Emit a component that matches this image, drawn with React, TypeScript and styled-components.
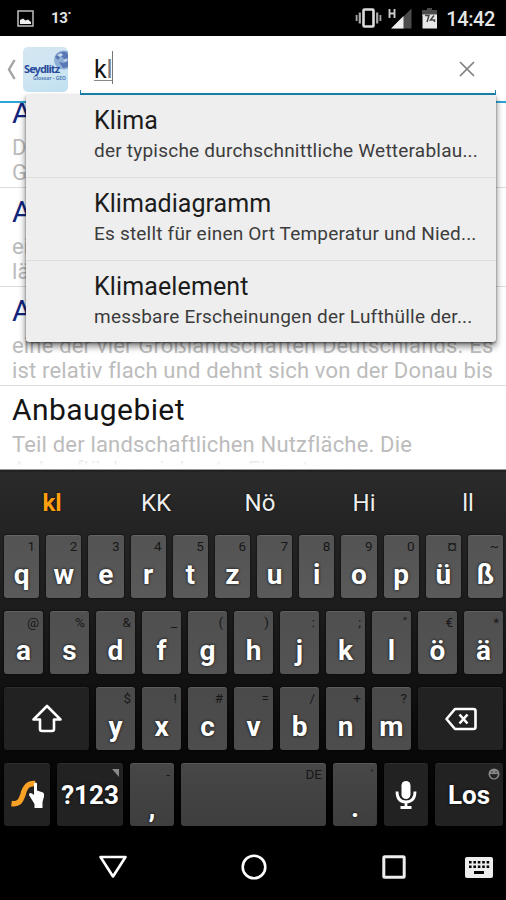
import React from 'react';
import styled, { createGlobalStyle, css } from 'styled-components';

const GlobalStyle = createGlobalStyle`
  * { box-sizing: border-box; }
  html, body { margin: 0; padding: 0; background: #000; }
  body { font-family: Roboto, "Noto Sans", sans-serif; overflow: hidden; }
`;

const Screen = styled.div`
  display: flex;
  flex-direction: column;
  width: 506px;
  height: 900px;
  overflow: hidden;
  background: #fff;
`;

/* ---------- status bar ---------- */

const StatusBar = styled.div`
  display: flex;
  align-items: center;
  flex: none;
  height: 36px;
  padding: 0 11px 0 17px;
  background: #000;
  color: #e6e6e6;
`;

const Temperature = styled.span`
  margin-left: 17px;
  font-size: 15px;
  font-weight: 700;
  letter-spacing: -0.3px;
`;

const StatusIcons = styled.div`
  display: flex;
  align-items: center;
  margin-left: auto;
`;

const Clock = styled.span`
  margin-left: 8px;
  padding-top: 2px;
  font-size: 20px;
  line-height: 36px;
  font-weight: 500;
  letter-spacing: -0.4px;
`;

/* ---------- action bar ---------- */

const ActionBar = styled.header`
  position: relative;
  z-index: 2;
  display: flex;
  flex: none;
  height: 67px;
  padding-left: 7px;
  background: #fff;
  border-bottom: 2px solid #2ba6d6;
`;

const BackButton = styled.div`
  flex: none;
  width: 16px;
  padding-top: 23px;
  svg { display: block; }
`;

const Logo = styled.div`
  position: relative;
  flex: none;
  width: 45px;
  height: 45px;
  margin-top: 11px;
  border-radius: 5px;
  overflow: hidden;
  background: linear-gradient(160deg, #d3e6f1 0%, #d0e6f3 50%, #bfe0f0 100%);
  svg { position: absolute; top: 2px; right: 0; }
`;

const LogoName = styled.div`
  position: relative;
  margin: 15px 0 0 1px;
  font: 700 11px/14px "Noto Sans", sans-serif;
  letter-spacing: -0.9px;
  color: #2a4c9c;
  white-space: nowrap;
`;

const LogoCaption = styled.div`
  margin-left: 10px;
  font: 700 5px/5px "Noto Sans", sans-serif;
  color: #5580b8;
  white-space: nowrap;
`;

const SearchField = styled.div`
  display: flex;
  flex: none;
  width: 416px;
  height: 59px;
  margin-left: 12px;
  padding: 0 20px 0 13px;
  border: solid #1b86b0;
  border-width: 0 1px 2px;
  border-image: linear-gradient(to top, #1b86b0 5px, transparent 5px) 2;
`;

const Query = styled.span`
  align-self: flex-start;
  height: 22px;
  margin-top: 23px;
  border-bottom: 1px solid #888;
  font-size: 25px;
  line-height: 22px;
  letter-spacing: -0.3px;
  color: #111;
  span { color: #777; }
`;

const Caret = styled.i`
  width: 1px;
  height: 33px;
  margin-top: 15px;
  background: #777;
`;

const ClearButton = styled.div`
  margin: 25px 0 0 auto;
  svg { display: block; }
`;

/* ---------- suggestions popup ---------- */

const Popup = styled.ul`
  position: absolute;
  z-index: 3;
  top: 59px;
  left: 26px;
  width: 470px;
  margin: 0;
  padding: 0;
  list-style: none;
  background: #eee;
  border-radius: 0 0 3px 3px;
  box-shadow: 0 4px 7px rgba(0, 0, 0, 0.55), 0 1px 2px rgba(0, 0, 0, 0.4);
`;

const PopupItem = styled.li`
  height: 82.4px;
  padding: 10px 14px 0 68px;
  & + & { border-top: 1px solid #dedede; }
`;

const PopupTitle = styled.div<{ $spacing: number }>`
  font-size: 25px;
  line-height: 31px;
  letter-spacing: ${(p) => p.$spacing}px;
  color: #1c1c1c;
`;

const PopupText = styled.div<{ $spacing: number }>`
  font-size: 19px;
  line-height: 30px;
  letter-spacing: ${(p) => p.$spacing}px;
  color: #3c3c3c;
  white-space: nowrap;
`;

/* ---------- glossary list ---------- */

const List = styled.div`
  position: relative;
  flex: none;
  height: 367px;
  overflow: hidden;
  background: #fff;
  border-bottom: 1px solid #999;
  &::after {
    content: '';
    position: absolute;
    inset: auto 0 0;
    height: 13px;
    background: linear-gradient(rgba(255, 255, 255, 0.4), #fff 80%);
  }
`;

const ListInner = styled.div`
  margin-top: -14px;
`;

const Entry = styled.article`
  height: 99px;
  padding: 6px 0 0 12px;
  border-bottom: 1px solid #dcdcdc;
  overflow: hidden;
`;

const EntryTitle = styled.div<{ $link?: boolean }>`
  font-size: 30px;
  line-height: 36px;
  letter-spacing: 0.4px;
  color: ${(p) => (p.$link ? '#12257d' : '#141414')};
`;

const EntryText = styled.div`
  margin-top: 4px;
  font-size: 22px;
  line-height: 25px;
  letter-spacing: 0.17px;
  color: #bcbcbc;
  white-space: pre;
`;

/* ---------- keyboard ---------- */

const Keyboard = styled.section`
  flex: none;
  height: 366px;
  border-top: 2px solid #222;
  background: linear-gradient(#2b2b2b 0, #232323 60px, #1c1c1c 140px, #0a0a0a 260px, #000 360px);
  overflow: hidden;
`;

const Candidates = styled.div`
  display: grid;
  grid-template-columns: repeat(5, 104px);
  height: 63px;
  font-size: 24px;
  line-height: 63px;
  text-align: center;
`;

const Candidate = styled.span<{ $active?: boolean }>`
  color: ${(p) => (p.$active ? '#ff9f12' : '#eee')};
  font-weight: ${(p) => (p.$active ? 700 : 400)};
  text-shadow: 0 0 2px #000;
`;

const KeyRow = styled.div<{ $columns: string }>`
  display: grid;
  grid-template-columns: ${(p) => p.$columns};
  column-gap: 7px;
  height: 63px;
  margin: 0 3px 13px 4px;
`;

const keyTones = [
  'linear-gradient(#535353, #5a5a5a)',
  'linear-gradient(#4f4f4f, #545454)',
  'linear-gradient(#4a4a4a, #4d4d4d)',
  'linear-gradient(#474747, #3e3e3e)',
];

const Key = styled.div<{ $tone?: number; $low?: boolean }>`
  position: relative;
  display: flex;
  justify-content: center;
  align-items: center;
  padding-top: ${(p) => (p.$low ? 25 : 16)}px;
  border-radius: 3px;
  background: ${(p) => keyTones[p.$tone ?? 0]};
  box-shadow: inset 0 1px 0 rgba(255, 255, 255, 0.1), 0 0 2px #000;
  color: #fff;
  font-size: 28px;
  font-weight: 700;
  text-shadow: 0 0 3px #000;
`;

const FunctionKey = styled(Key)`
  padding-top: 0;
  background: #222;
  box-shadow: inset 0 1px 0 rgba(255, 255, 255, 0.05), 0 0 2px #000;
  font-size: 26px;
  svg { display: block; }
`;

const Hint = styled.span`
  position: absolute;
  top: 3px;
  right: 4px;
  font-size: 13.5px;
  line-height: 16px;
  font-weight: 400;
  color: #181818;
  text-shadow: none;
`;

const Corner = styled.span`
  position: absolute;
  top: 5px;
  right: 3px;
`;

/* ---------- navigation bar ---------- */

const NavBar = styled.nav`
  display: grid;
  grid-template-columns: 227px 54px 227px;
  flex: none;
  height: 64px;
  background: #000;
`;

const NavItem = styled.div<{ $place?: 'center' | 'end' }>`
  display: flex;
  align-items: center;
  padding-bottom: 2px;
  ${(p) =>
    p.$place === 'center' &&
    css`
      justify-content: center;
    `}
  ${(p) =>
    p.$place === 'end' &&
    css`
      justify-content: space-between;
      padding: 0 15px 2px 101px;
    `}
  svg { display: block; }
`;

const BackSlot = styled(NavItem)`
  padding-left: 98px;
`;

const suggestions = [
  { title: 'Klima', text: 'der typische durchschnittliche Wetterablau...', ts: 0.1, ds: 0.22 },
  { title: 'Klimadiagramm', text: 'Es stellt für einen Ort Temperatur und Nied...', ts: 0.04, ds: 0.2 },
  { title: 'Klimaelement', text: 'messbare Erscheinungen der Lufthülle der...', ts: 0.12, ds: 0.22 },
];

const entries = [
  { title: 'Abfluss', link: true, text: 'Der Teil des Niederschlags, der in\nGewässern abfließt' },
  { title: 'Agrarraum', link: true, text: 'ein durch die Landwirtschaft\nländlich geprägter Raum' },
  {
    title: 'Alpenvorland',
    link: true,
    text: 'eine der vier Großlandschaften Deutschlands. Es\nist relativ flach und dehnt sich von der Donau bis',
  },
  { title: 'Anbaugebiet', link: false, text: 'Teil der landschaftlichen Nutzfläche. Die\nAnbaufläche wird unter Einsatz von' },
];

const rowOne = [
  ['q', '1'], ['w', '2'], ['e', '3'], ['r', '4'], ['t', '5'], ['z', '6'],
  ['u', '7'], ['i', '8'], ['o', '9'], ['p', '0'], ['ü', '¤'], ['ß', '~'],
];
const rowTwo = [
  ['a', '@'], ['s', '%'], ['d', '&'], ['f', '_'], ['g', '('], ['h', ')'],
  ['j', ':'], ['k', ';'], ['l', '"'], ['ö', '€'], ['ä', '*'],
];
const rowThree = [['y', '$'], ['x', '!'], ['c', '#'], ['v', '='], ['b', '/'], ['n', '+'], ['m', '?']];

const renderKeys = (keys: string[][], tone: number) =>
  keys.map(([letter, hint]) => (
    <Key key={letter} $tone={tone}>
      {letter}
      <Hint>{hint}</Hint>
    </Key>
  ));

const keyboardDots = [0, 1, 2, 3, 4];

export default function App() {
  return (
    <Screen>
      <GlobalStyle />
      <StatusBar>
        <svg width="17" height="17" viewBox="0 0 17 17">
          <rect x="1" y="1" width="15" height="15" fill="none" stroke="#b5b5b5" strokeWidth="1.6" />
          <path d="M3 14V10l3-1.5 2.5 2 2.500-1L14 12v2z" fill="#eee" />
        </svg>
        <Temperature>13˙</Temperature>
        <StatusIcons>
          <svg width="85" height="24" viewBox="0 0 85 24">
            <rect x="10.500" y="3.500" width="10" height="17" rx="1" fill="none" stroke="#ddd" strokeWidth="2.600" />
            <path d="M6.800 6.500v11M24.200 6.500v11" stroke="#aaa" strokeWidth="2.200" />
            <path d="M3.600 9v6M27.400 9v6" stroke="#aaa" strokeWidth="1.800" />
            <path d="M58.500 2.500v20H38.500z" fill="#4c4c4c" />
            <path d="M50.500 10v12.500H38z" fill="#eee" />
            <path d="M36.500 3v9M41.500 3v9M36.500 7.500h5" stroke="#ccc" strokeWidth="1.900" />
            <path d="M74 2h5v2h5v6H69V4h5z" fill="#4a4a4a" />
            <path d="M69.500 8.500h14.500v14H69.500z" fill="#e8e8e8" />
            <path d="M72 9.500h4l-2 6.500M81 9.500l-3.500 4.500h4v2" fill="none" stroke="#444" strokeWidth="1.500" />
          </svg>
          <Clock>14:42</Clock>
        </StatusIcons>
      </StatusBar>

      <ActionBar>
        <BackButton>
          <svg width="9" height="21" viewBox="0 0 9 21">
            <path d="M7.600 1 2 10.500 7.600 20" fill="none" stroke="#a3a3a3" strokeWidth="2.400" />
          </svg>
        </BackButton>
        <Logo>
          <svg width="15" height="22" viewBox="0 0 15 22">
            <circle cx="10.500" cy="11" r="9.500" fill="#8faed3" />
            <path d="M2 8c3-5 8-6 11-5l2 2v4l-4 1-3-3-3 4zM6 13l5 1 4-2v6l-5 1z" fill="#5a76b4" />
            <path d="M4 6 8 4l2 2-3 2zM10 11l4-1-1 3z" fill="#c8dcec" />
          </svg>
          <LogoName>Seydlitz</LogoName>
          <LogoCaption>Glossar - GEO</LogoCaption>
        </Logo>
        <SearchField>
          <Query>
            k<span>l</span>
          </Query>
          <Caret />
          <ClearButton>
            <svg width="16" height="16" viewBox="0 0 16 16">
              <path d="M1 1 15 15M15 1 1 15" stroke="#808080" strokeWidth="1.700" />
            </svg>
          </ClearButton>
        </SearchField>
        <Popup>
          {suggestions.map((s) => (
            <PopupItem key={s.title}>
              <PopupTitle $spacing={s.ts}>{s.title}</PopupTitle>
              <PopupText $spacing={s.ds}>{s.text}</PopupText>
            </PopupItem>
          ))}
        </Popup>
      </ActionBar>

      <List>
        <ListInner>
          {entries.map((e) => (
            <Entry key={e.title}>
              <EntryTitle $link={e.link}>{e.title}</EntryTitle>
              <EntryText>{e.text}</EntryText>
            </Entry>
          ))}
        </ListInner>
      </List>

      <Keyboard>
        <Candidates>
          <Candidate $active>kl</Candidate>
          <Candidate>KK</Candidate>
          <Candidate>Nö</Candidate>
          <Candidate>Hi</Candidate>
          <Candidate>ll</Candidate>
        </Candidates>
        <KeyRow $columns="repeat(12, 1fr)">{renderKeys(rowOne, 0)}</KeyRow>
        <KeyRow $columns="repeat(11, 1fr)">{renderKeys(rowTwo, 1)}</KeyRow>
        <KeyRow $columns="85px repeat(7, 1fr) 85px">
          <FunctionKey>
            <svg width="32" height="30" viewBox="0 0 32 30">
              <path
                d="M16 2 2.500 15.500H9V25q0 2 2 2h10q2 0 2-2v-9.500h6.500z"
                fill="none"
                stroke="#fff"
                strokeWidth="2.600"
                strokeLinejoin="round"
              />
            </svg>
          </FunctionKey>
          {renderKeys(rowThree, 2)}
          <FunctionKey>
            <svg width="34" height="24" viewBox="0 0 34 24">
              <path
                d="M11 2h18.500q2 0 2 2v16q0 2-2 2H11L2.500 12z"
                fill="none"
                stroke="#fff"
                strokeWidth="2.600"
                strokeLinejoin="round"
              />
              <path d="m15.500 7.500 8 9m0-9-8 9" stroke="#fff" strokeWidth="2.600" />
            </svg>
          </FunctionKey>
        </KeyRow>
        <KeyRow $columns="46px 66px 44px 1fr 44px 44px 68px">
          <FunctionKey>
            <svg width="34" height="32" viewBox="0 0 34 32">
              <path
                d="M1.500 24.500c7 1 9-1.500 11.500-9 2-8 5-11.500 12-11"
                fill="none"
                stroke="#f9a124"
                strokeWidth="5.500"
              />
              <path
                d="M24 4.500q1.500-2 3 0v7l6 2q1.500 1 1 4l-1.500 5.500v6h-8v-4l-5.500-9q0-3 3-1.500l2 1.500z"
                fill="#fff"
              />
            </svg>
          </FunctionKey>
          <FunctionKey>
            ?123
            <Corner>
              <svg width="9" height="9" viewBox="0 0 9 9">
                <path d="M1 1h7v8z" fill="#888" />
              </svg>
            </Corner>
          </FunctionKey>
          <Key $tone={3} $low>
            ,<Hint>-</Hint>
          </Key>
          <Key $tone={3}>
            <Hint>DE</Hint>
          </Key>
          <Key $tone={3} $low>
            .<Hint>'</Hint>
          </Key>
          <FunctionKey>
            <svg width="22" height="30" viewBox="0 0 22 30">
              <rect x="6.500" y="1" width="9" height="18" rx="4.500" fill="#fff" />
              <path d="M2 11.500q0 10.500 9 10.500t9-10.500M11 22v5M5.500 27.500h11" fill="none" stroke="#fff" strokeWidth="2.800" />
            </svg>
          </FunctionKey>
          <FunctionKey>
            Los
            <Corner>
              <svg width="12" height="12" viewBox="0 0 12 12">
                <circle cx="6" cy="6" r="5.500" fill="#888" />
                <path d="M2.500 6.500h7q-.5 3.500-3.500 3.500t-3.500-3.500M3 4h2M7 4h2" fill="#222" stroke="#222" strokeWidth=".8" />
              </svg>
            </Corner>
          </FunctionKey>
        </KeyRow>
      </Keyboard>

      <NavBar>
        <BackSlot>
          <svg width="30" height="24" viewBox="0 0 30 24">
            <path d="M2.500 2h25L15 21.500z" fill="none" stroke="#fff" strokeWidth="2.600" strokeLinejoin="round" />
          </svg>
        </BackSlot>
        <NavItem $place="center">
          <svg width="26" height="26" viewBox="0 0 26 26">
            <circle cx="13" cy="13" r="11.300" fill="none" stroke="#fff" strokeWidth="2.600" />
          </svg>
        </NavItem>
        <NavItem $place="end">
          <svg width="24" height="24" viewBox="0 0 24 24">
            <rect x="1.800" y="1.800" width="20.400" height="20.400" rx="1" fill="none" stroke="#eee" strokeWidth="3" />
          </svg>
          <svg width="28" height="21" viewBox="0 0 28 21">
            <rect width="28" height="21" rx="2" fill="#ededed" />
            {keyboardDots.map((i) => (
              <path key={i} d={`M${4 + i * 4.4} 4h2.600v2.600h-2.600zM${4 + i * 4.4} 8.500h2.600v2.600h-2.600z`} fill="#000" />
            ))}
            <path d="M9 14h10v3H9z" fill="#000" />
          </svg>
        </NavItem>
      </NavBar>
    </Screen>
  );
}
